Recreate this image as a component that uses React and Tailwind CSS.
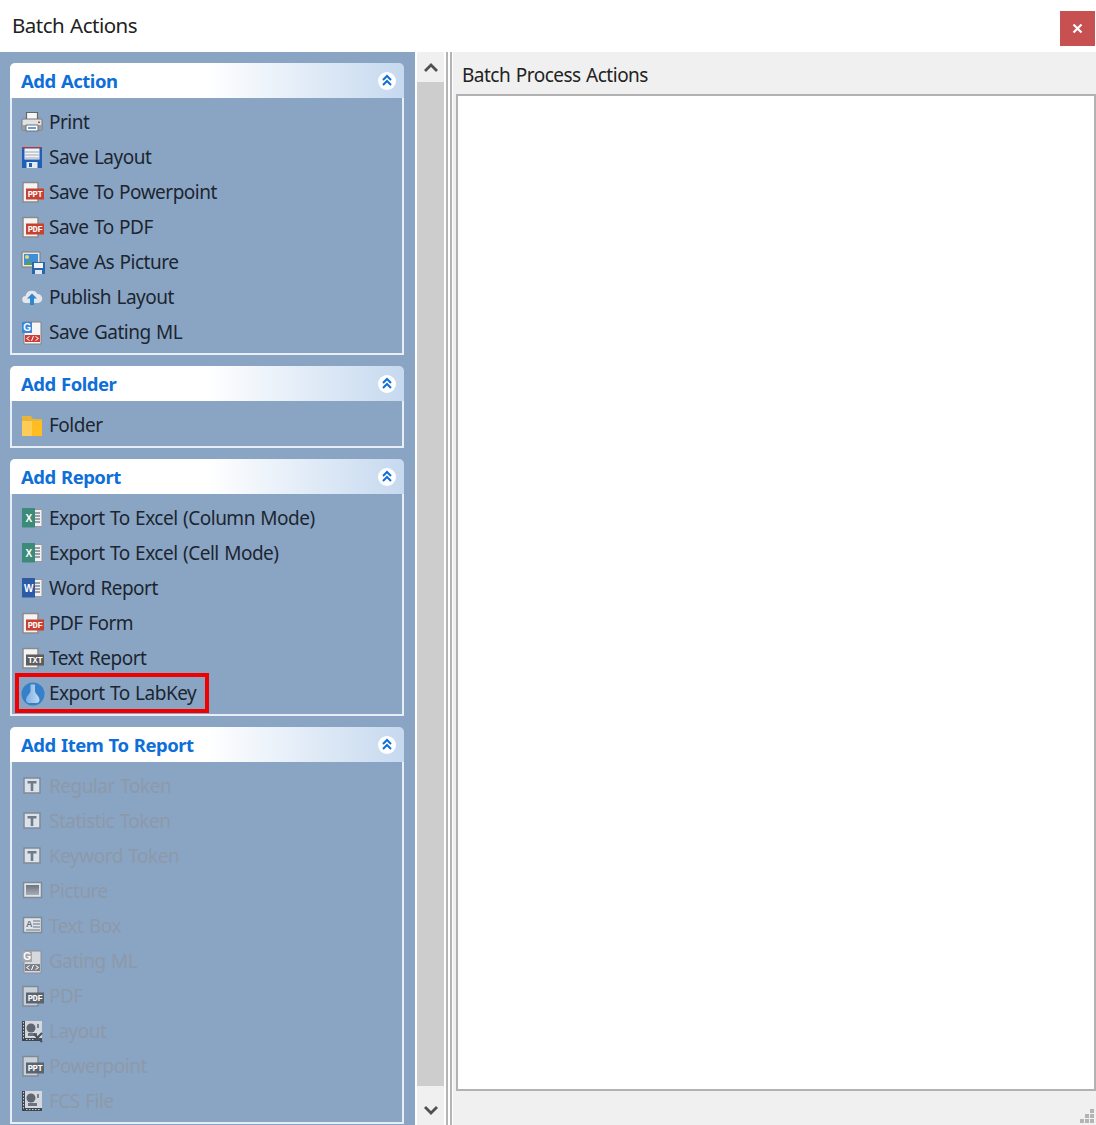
const Doc = ({ children, tag, tagFill = '#c8402f', page = '#f4f4f4', edge = '#8a8a8a' }) => (
  <svg width="24" height="24" viewBox="0 0 24 24" className="shrink-0">
    <path d="M2 1.500h15v19.500H2z" fill={page} stroke={edge} strokeWidth="1.500" />
    {children}
    {tag && (
      <>
        <rect x="5" y="7.500" width="18" height="11" fill={tagFill} />
        <text x="14" y="16" fontSize="8.800" fontWeight="700" textAnchor="middle" fill="#fff" fontFamily="Liberation Mono, monospace">
          {tag}
        </text>
      </>
    )}
  </svg>
)

const PrintIcon = () => (
  <svg width="24" height="24" viewBox="0 0 24 24" className="shrink-0">
    <path d="M5.500 1.500h11v8h-11z" fill="#f7f7f7" stroke="#666" strokeWidth="1.200" />
    <path d="M2 8h18a1 1 0 0 1 1 1v10H1V9a1 1 0 0 1 1-1z" fill="#dfe2e5" stroke="#777" />
    <path d="M1 14h20v5H1z" fill="#9a9ea3" />
    <path d="M5 14h12v6H5z" fill="#fff" stroke="#6f6f6f" />
    <path d="M7 17h8" stroke="#3f86cf" strokeWidth="1.600" />
    <rect x="17" y="10.500" width="2" height="1.600" fill="#c9473c" />
  </svg>
)

const SaveIcon = () => (
  <svg width="24" height="24" viewBox="0 0 24 24" className="shrink-0">
    <path d="M1 1h20v21H1z" fill="#1f5fb4" />
    <path d="M1 1h20v1.500H1z" fill="#a93a44" />
    <path d="M3.500 2.500h15v11h-15z" fill="#f4f4f4" />
    <path d="M3.500 6h15M3.500 9h15M3.500 12h15" stroke="#9aa7b8" />
    <path d="M5.500 16h11v6h-11z" fill="#e4eaf1" />
    <rect x="8" y="17" width="3" height="4" fill="#1f5fb4" />
  </svg>
)

const PictureSaveIcon = () => (
  <svg width="24" height="24" viewBox="0 0 24 24" className="shrink-0">
    <path d="M1 1h18v15H1z" fill="#e6e6e6" stroke="#7a7a7a" />
    <path d="M3 3h14v11H3z" fill="#3f8fd6" />
    <circle cx="6" cy="6" r="2" fill="#f2d65c" />
    <path d="M3 14l5-4 4 4z" fill="#5aa04c" />
    <path d="M11 11h13v12H11z" fill="#2b66ad" />
    <path d="M13 12h9v5h-9z" fill="#f4f4f4" />
    <path d="M14 19h7v4h-7z" fill="#dfe6ee" />
  </svg>
)

const CloudIcon = () => (
  <svg width="24" height="24" viewBox="0 0 24 24" className="shrink-0">
    <path d="M5 17a3.500 3.500 0 0 1-.5-7 6.500 6.500 0 0 1 12-2 4.500 4.500 0 0 1 .5 9z" fill="#e3e6ea" />
    <path d="M11 7.500l5 5h-3v6.500H9v-6.500H6z" fill="#2f87d0" />
  </svg>
)

const GatingIcon = ({ muted }) => (
  <svg width="24" height="24" viewBox="0 0 24 24" className="shrink-0">
    <path d="M3 1h17v22H3z" fill={muted ? '#d5d9de' : '#f6f6f6'} stroke={muted ? '#8a8f96' : '#808080'} />
    <path d="M1 1h10v11H1z" fill={muted ? '#a3a7ad' : '#3a86d8'} />
    <text x="6" y="10" fontSize="10" fontWeight="700" textAnchor="middle" fill="#fff" fontFamily="Liberation Sans, sans-serif">
      G
    </text>
    <path d="M4 14h15v7H4z" fill={muted ? '#7b7f86' : '#cf3d3a'} />
    <path d="M8.500 15.500l-3 2 3 2M14.500 15.500l3 2-3 2M12.500 15l-2 5" fill="none" stroke="#fff" strokeWidth="1" />
  </svg>
)

const FolderIcon = () => (
  <svg width="24" height="24" viewBox="0 0 24 24" className="shrink-0">
    <path d="M1 2h9l2 3h9v17H1z" fill="#e7b53a" />
    <path d="M1 7h10v15H1z" fill="#ffcd57" />
    <path d="M11 7h10v15H11z" fill="#ffbd1f" />
  </svg>
)

const OfficeIcon = ({ letter, color }) => (
  <svg width="24" height="24" viewBox="0 0 24 24" className="shrink-0">
    <path d="M12 2.500h9v17h-9z" fill="#f2f2f2" stroke="#9a9a9a" />
    <path d="M14 6h5M14 9h5M14 12h5M14 15h5" stroke="#7b8794" strokeWidth="1.400" />
    <path d="M1 1h13v19.500H1z" fill={color} />
    <text x="7.500" y="14.500" fontSize="10" fontWeight="700" textAnchor="middle" fill="#fff" fontFamily="Liberation Sans, sans-serif">
      {letter}
    </text>
  </svg>
)

const FlaskIcon = () => (
  <svg width="24" height="24" viewBox="0 0 24 24" className="shrink-0">
    <defs>
      <linearGradient id="flask" x1="0" y1="0" x2="1" y2="0">
        <stop offset="0" stopColor="#7fb0e2" />
        <stop offset="1" stopColor="#c2daf2" />
      </linearGradient>
    </defs>
    <circle cx="12" cy="12" r="11.500" fill="#3580c8" />
    <path d="M9.500 2.500h4.500v6.500c0 2.500 4.500 5 4.500 9 0 2-1.500 3-3 3H8c-1.500 0-3-1-3-3 0-4 4.500-6.500 4.500-9z" fill="url(#flask)" />
  </svg>
)

const TokenIcon = () => (
  <svg width="24" height="24" viewBox="0 0 24 24" className="shrink-0">
    <rect x="3" y="3" width="16" height="15" fill="#dbe2ea" stroke="#7f8a97" strokeWidth="1.500" />
    <path d="M6.500 6h9v2.500h-3.200v7.500H9.700V8.500H6.500z" fill="#707a88" />
  </svg>
)

const PictureMutedIcon = () => (
  <svg width="24" height="24" viewBox="0 0 24 24" className="shrink-0">
    <defs>
      <linearGradient id="pictureMuted" x1="0" y1="0" x2="0" y2="1">
        <stop offset="0" stopColor="#6d7481" />
        <stop offset="1" stopColor="#a6adb8" />
      </linearGradient>
    </defs>
    <rect x="2.500" y="2.500" width="18" height="15" fill="#dfe4ea" stroke="#7f8a97" strokeWidth="1.500" />
    <rect x="5" y="5" width="13" height="10" fill="url(#pictureMuted)" />
  </svg>
)

const TextBoxIcon = () => (
  <svg width="24" height="24" viewBox="0 0 24 24" className="shrink-0">
    <rect x="2.500" y="2.500" width="18" height="15" fill="#dfe4ea" stroke="#7f8a97" strokeWidth="1.500" />
    <text x="8" y="12" fontSize="9" fontWeight="700" textAnchor="middle" fill="#6a7280" fontFamily="Liberation Sans, sans-serif">
      A
    </text>
    <path d="M12 6h7M12 9h7M12 12h7M5 15h14" stroke="#6a7280" />
  </svg>
)

const CytoIcon = ({ zoom }) => (
  <svg width="24" height="24" viewBox="0 0 24 24" className="shrink-0">
    <path d="M1 1h20v20H1z" fill="#d3d8de" />
    <path d="M1 1h3v20H1zM4 18h17v3H4z" fill="#3f4650" />
    <path d="M2.500 2v18M5 19.500h15" stroke="#c9cfd6" strokeWidth="1" strokeDasharray="1.500 1.500" />
    <circle cx="10" cy="8" r="4.500" fill="#5f6672" />
    <path d="M7 13h9v3H7z" fill="#6b7280" />
    <path d="M17 4v4" stroke="#5f6672" strokeWidth="1.500" />
    {zoom && <path d="M13 14l8 8M21 13l-7 7" stroke="#4a515c" strokeWidth="2" />}
  </svg>
)

const groups = [
  {
    title: 'Add Action',
    items: [
      ['Print', <PrintIcon />],
      ['Save Layout', <SaveIcon />],
      ['Save To Powerpoint', <Doc tag="PPT" />],
      ['Save To PDF', <Doc tag="PDF" />],
      ['Save As Picture', <PictureSaveIcon />],
      ['Publish Layout', <CloudIcon />],
      ['Save Gating ML', <GatingIcon />],
    ],
  },
  { title: 'Add Folder', items: [['Folder', <FolderIcon />]] },
  {
    title: 'Add Report',
    items: [
      ['Export To Excel (Column Mode)', <OfficeIcon letter="X" color="#3c8a78" />],
      ['Export To Excel (Cell Mode)', <OfficeIcon letter="X" color="#3c8a78" />],
      ['Word Report', <OfficeIcon letter="W" color="#2c5aa5" />],
      ['PDF Form', <Doc tag="PDF" />],
      ['Text Report', <Doc tag="TXT" tagFill="#5d5d5d" />],
      ['Export To LabKey', <FlaskIcon />, true],
    ],
  },
  {
    title: 'Add Item To Report',
    disabled: true,
    items: [
      ['Regular Token', <TokenIcon />],
      ['Statistic Token', <TokenIcon />],
      ['Keyword Token', <TokenIcon />],
      ['Picture', <PictureMutedIcon />],
      ['Text Box', <TextBoxIcon />],
      ['Gating ML', <GatingIcon muted />],
      ['PDF', <Doc tag="PDF" tagFill="#5c6470" page="#c9d0d8" edge="#7f8a97" />],
      ['Layout', <CytoIcon zoom />],
      ['Powerpoint', <Doc tag="PPT" tagFill="#5c6470" page="#c9d0d8" edge="#7f8a97" />],
      ['FCS File', <CytoIcon />],
    ],
  },
]

function ActionRow({ label, icon, highlighted, disabled }) {
  return (
    <div className="relative flex h-[35px] items-center gap-[4px] pl-[9px]">
      {icon}
      <span className={disabled ? 'text-[#8d99a9]' : 'text-[#1c2530]'}>{label}</span>
      {highlighted && (
        <div className="absolute -top-[3px] -bottom-[2px] left-[3px] w-[194px] border-4 border-[#f00000]" />
      )}
    </div>
  )
}

function Group({ title, items, disabled }) {
  return (
    <section className="w-[394px]">
      <header className="flex h-[35px] items-center justify-between rounded-t-[5px] bg-gradient-to-r from-white from-50% to-[#c6d9ef] pl-[11px] pr-[8px]">
        <h2 className="pt-[2px] text-[18.5px] font-bold text-[#0f6fd8]">{title}</h2>
        <span className="flex h-[18px] w-[18px] items-center justify-center rounded-full bg-white">
          <svg width="12" height="13" viewBox="0 0 12 13" fill="none" stroke="#0f6fd8" strokeWidth="2">
            <path d="M2 6l4-4 4 4M2 11l4-4 4 4" />
          </svg>
        </span>
      </header>
      <div className="border-x-2 border-b-2 border-[#e8eef6] pb-[3px] pt-[7px]">
        {items.map(([label, icon, highlighted]) => (
          <ActionRow key={label} label={label} icon={icon} highlighted={highlighted} disabled={disabled} />
        ))}
      </div>
    </section>
  )
}

export default function App() {
  return (
    <div className="flex h-[1125px] flex-col overflow-hidden bg-white font-['Noto_Sans',sans-serif] text-[19px] leading-none tracking-[-0.5px] [word-spacing:1px]">
      <div className="flex h-[52px] shrink-0 items-center justify-between pb-[1px] pl-[12px] pr-px">
        <h1 className="text-[20.5px] text-[#222]">Batch Actions</h1>
        <button type="button" className="mt-[5px] flex h-[35px] w-[35px] items-center justify-center bg-[#c75050]">
          <svg width="11" height="11" viewBox="0 0 11 11" stroke="#fff" strokeWidth="2.200">
            <path d="M1.500 1.500l8 8M9.500 1.500l-8 8" />
          </svg>
        </button>
      </div>

      <div className="flex min-h-0 flex-1">
        <aside className="flex w-[415px] shrink-0 flex-col gap-[11px] bg-[#8aa5c4] pl-[10px] pt-[11px]">
          {groups.map((group) => (
            <Group key={group.title} {...group} />
          ))}
        </aside>

        <div className="ml-[2px] flex w-[27px] shrink-0 flex-col bg-[#f0f0f0]">
          <div className="flex h-[30px] items-center justify-center">
            <svg width="14" height="9" viewBox="0 0 14 9" fill="none" stroke="#505050" strokeWidth="2.800">
              <path d="M1 8l6-6 6 6" />
            </svg>
          </div>
          <div className="flex-1 bg-[#cdcdcd]" />
          <div className="flex h-[39px] items-center justify-center pt-[10px]">
            <svg width="14" height="9" viewBox="0 0 14 9" fill="none" stroke="#505050" strokeWidth="2.800">
              <path d="M1 1l6 6 6-6" />
            </svg>
          </div>
        </div>

        <div className="flex w-[9px] shrink-0 justify-between bg-white pl-[2px] pr-px">
          <div className="w-[2px] bg-[#b4b4b4]" />
          <div className="w-[2px] bg-[#b4b4b4]" />
        </div>

        <main className="relative flex min-w-0 flex-1 flex-col bg-[#f0f0f0] pb-[34px] pl-[3px]">
          <div className="flex h-[42px] shrink-0 items-center pl-[6px] pt-[4px] text-[#222]">Batch Process Actions</div>
          <div className="flex-1 border-2 border-[#b2b2b2] bg-white" />
          <div className="absolute bottom-[2px] right-[2px] grid grid-cols-3 gap-px">
            <span />
            <span />
            <span className="h-[4px] w-[4px] bg-[#b4b4b4]" />
            <span />
            <span className="h-[4px] w-[4px] bg-[#b4b4b4]" />
            <span className="h-[4px] w-[4px] bg-[#b4b4b4]" />
            <span className="h-[4px] w-[4px] bg-[#b4b4b4]" />
            <span className="h-[4px] w-[4px] bg-[#b4b4b4]" />
            <span className="h-[4px] w-[4px] bg-[#b4b4b4]" />
          </div>
        </main>
      </div>
    </div>
  )
}
